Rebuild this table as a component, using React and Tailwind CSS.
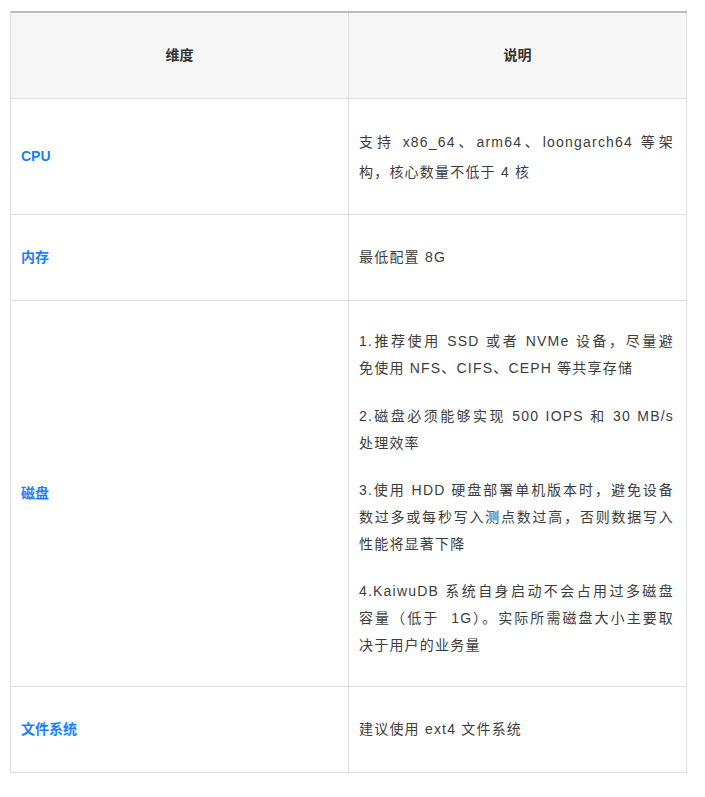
import React from "react";

const font = { fontFamily: '"Liberation Sans", "Noto Sans CJK SC", sans-serif' };

function Lines({ lines, lh }) {
  return (
    <div>
      {lines.map((l, i) =>
        i < lines.length - 1 ? (
          <div key={i} className={`text-justify [text-align-last:justify] ${lh}`}>{l}</div>
        ) : (
          <div key={i} className={`text-left ${lh}`}>{l}</div>
        )
      )}
    </div>
  );
}

function Row({ label, h, children }) {
  return (
    <>
      <div className={`flex items-center border-r border-b border-[#dddddd] pl-[10px] ${h}`}>
        <span className="text-[14px] font-bold text-[#1a7ff5]">{label}</span>
      </div>
      <div className={`flex items-center border-r border-b border-[#dddddd] pl-[10px] pr-[12px] ${h}`}>
        <div className="w-full text-[14px] text-[#3c3c3c] tracking-[1.2px]">{children}</div>
      </div>
    </>
  );
}

export default function App() {
  return (
    <div className="min-h-[797px] w-[705px] bg-white pt-[11px] pl-[10px]" style={font}>
      <div className="grid w-[677px] grid-cols-[338px_338px] border-l border-t-2 border-l-[#dddddd] border-t-[#bbbbbb]">
        <div className="flex h-[86px] items-center justify-center border-r border-b border-[#dddddd] bg-[#f6f6f6]">
          <span className="text-[14px] font-bold text-[#333333]">维度</span>
        </div>
        <div className="flex h-[86px] items-center justify-center border-r border-b border-[#dddddd] bg-[#f6f6f6]">
          <span className="text-[14px] font-bold text-[#333333]">说明</span>
        </div>

        <Row label="CPU" h="h-[116px]">
          <Lines
            lh="leading-[30px]"
            lines={["支持 x86_64、arm64、loongarch64 等架", "构，核心数量不低于 4 核"]}
          />
        </Row>

        <Row label="内存" h="h-[86px]">
          <p className="leading-[27px]">最低配置 8G</p>
        </Row>

        <Row label="磁盘" h="h-[386px]">
          <div className="flex flex-col gap-[21px]">
            <Lines
              lh="leading-[26.7px]"
              lines={["1.推荐使用 SSD 或者 NVMe 设备，尽量避", "免使用 NFS、CIFS、CEPH 等共享存储"]}
            />
            <Lines
              lh="leading-[26.7px]"
              lines={["2.磁盘必须能够实现 500 IOPS 和 30 MB/s", "处理效率"]}
            />
            <Lines
              lh="leading-[26.7px]"
              lines={[
                "3.使用 HDD 硬盘部署单机版本时，避免设备",
                "数过多或每秒写入测点数过高，否则数据写入",
                "性能将显著下降",
              ]}
            />
            <Lines
              lh="leading-[26.7px]"
              lines={[
                "4.KaiwuDB 系统自身启动不会占用过多磁盘",
                "容量（低于 \u00a01G）。实际所需磁盘大小主要取",
                "决于用户的业务量",
              ]}
            />
          </div>
        </Row>

        <Row label="文件系统" h="h-[86px]">
          <p className="leading-[27px]">建议使用 ext4 文件系统</p>
        </Row>
      </div>
    </div>
  );
}
